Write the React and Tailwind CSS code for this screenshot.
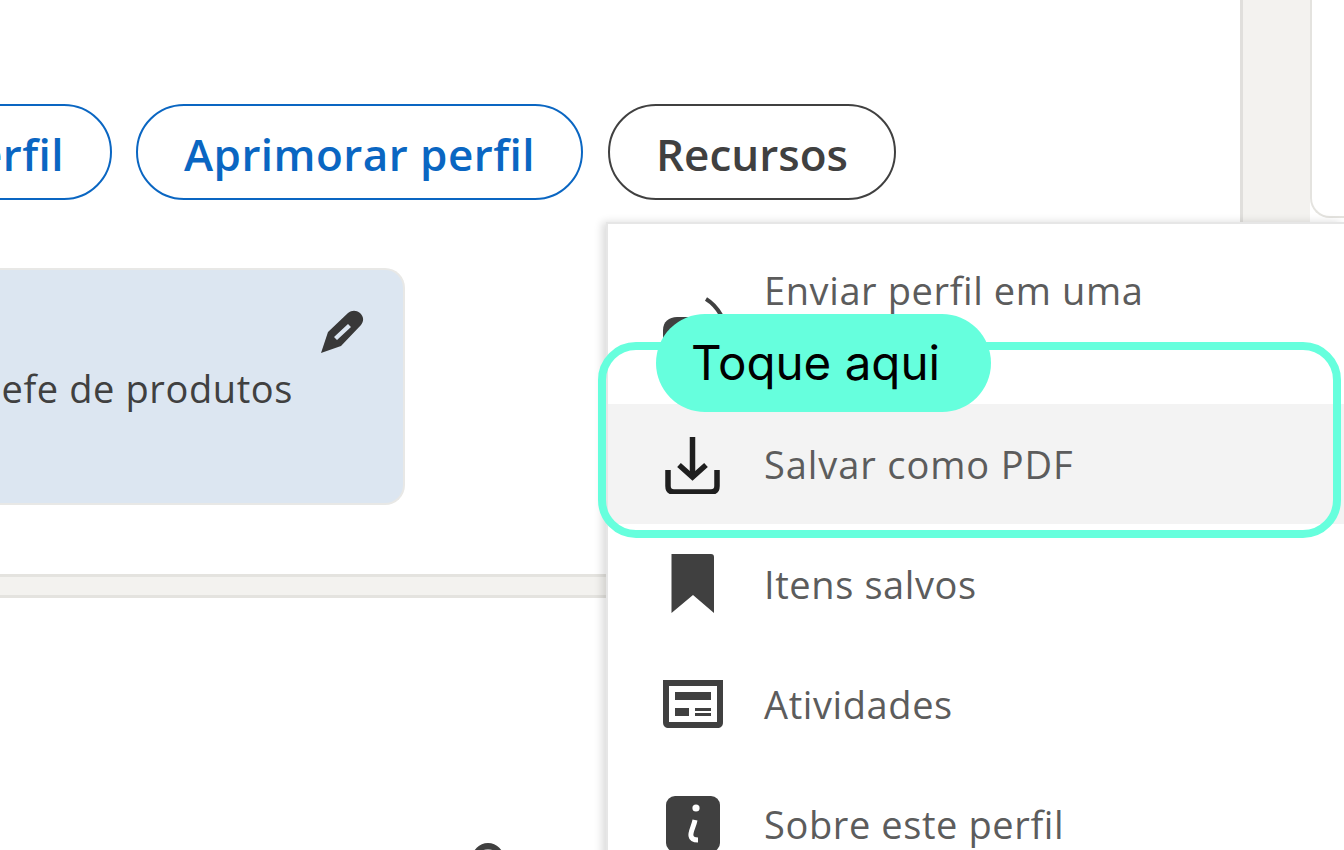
function SendIcon() {
  return (
    <svg width="60" height="60" viewBox="0 0 60 60" className="shrink-0" fill="none">
      <path d="M43 15 C48 18 54 24 58 31" stroke="#404040" strokeWidth="4" />
      <path d="M0 60 V46 C0 38 6 33 14 33 H30 V60 Z" fill="#404040" />
    </svg>
  );
}

function DownloadIcon() {
  return (
    <svg width="60" height="60" viewBox="0 0 60 60" className="shrink-0" fill="none" stroke="#1f1f1f" strokeWidth="5.5">
      <path d="M29.5 3 V43" />
      <path d="M16 31 L29.5 43 L43 31" />
      <path d="M5 36 V52 C5 56 7 58 11 58 H48 C52 58 54 56 54 52 V36" />
    </svg>
  );
}

function BookmarkIcon() {
  return (
    <svg width="60" height="60" viewBox="0 0 60 60" className="shrink-0">
      <path d="M8.5 0 H48 C50 0 51 1 51 3 V59 L30 41 L8.5 59 Z" fill="#404040" />
    </svg>
  );
}

function ActivityIcon() {
  return (
    <svg width="60" height="48" viewBox="0 0 60 48" className="shrink-0">
      <path d="M0 0 H60 V42 C60 46 58 48 54 48 H6 C2 48 0 46 0 42 Z" fill="#404040" />
      <rect x="6" y="6" width="48" height="36" fill="#fff" />
      <rect x="12" y="12" width="36" height="8" fill="#404040" />
      <rect x="12" y="28" width="14" height="8" fill="#404040" />
      <rect x="32" y="28" width="16" height="3" fill="#404040" />
      <rect x="32" y="33" width="16" height="3" fill="#404040" />
    </svg>
  );
}

function InfoIcon() {
  return (
    <svg width="60" height="60" viewBox="0 0 60 60" className="shrink-0">
      <rect x="3" y="2" width="54" height="56" rx="9" fill="#404040" />
      <circle cx="33" cy="14" r="3.6" fill="#fff" />
      <path d="M32 26 C31 32 27 38 28 42 C28.5 45 31 46 35 46" fill="none" stroke="#fff" strokeWidth="5" />
    </svg>
  );
}

function Pencil() {
  return (
    <svg width="44" height="44" viewBox="0 0 44 44" className="shrink-0">
      <path
        fillRule="evenodd"
        d="M1 43 L8 22 L28 3 C32 0 36 0 40 3 C44 7 44 11 41 15 L21 36 Z M14 27 L17 30 L31 17 L28 14 Z"
        fill="#383838"
      />
    </svg>
  );
}

function MenuRow({ icon, label, className = "h-[120px]", textClass = "" }) {
  return (
    <div className={`flex items-center gap-[41px] pl-[55px] ${className}`}>
      <div className="flex w-[60px] shrink-0 justify-center">{icon}</div>
      <div className={`w-[460px] text-[38px] leading-[46px] tracking-[0.6px] text-[#5c5c5c] ${textClass}`}>{label}</div>
    </div>
  );
}

export default function App() {
  return (
    <div
      className="relative flex h-[850px] w-[1344px] overflow-hidden bg-white"
      style={{ fontFamily: '"Open Sans", "Noto Sans", sans-serif' }}
    >
      <div className="w-[1240px] shrink-0">
        <div className="flex h-[268px] w-[896px] items-start justify-end gap-[25px] pt-[104px]">
          <button className="-mr-px h-[96px] shrink-0 whitespace-nowrap rounded-full border-2 border-[#0a66c2] pl-[47px] pr-[46px] pt-[3px] text-[44px] font-semibold tracking-[0.45px] text-[#0a66c2]">
            Adicionar seção ao perfil
          </button>
          <button className="h-[96px] w-[447px] shrink-0 whitespace-nowrap rounded-full border-2 border-[#0a66c2] pt-[3px] text-[44px] font-semibold tracking-[0.45px] text-[#0a66c2]">
            Aprimorar perfil
          </button>
          <button className="h-[96px] w-[288px] shrink-0 whitespace-nowrap rounded-full border-2 border-[#404040] pt-[3px] text-[44px] font-semibold text-[#404040]">
            Recursos
          </button>
        </div>

        <div className="flex h-[237px] w-[405px] flex-col items-end rounded-r-[20px] border-2 border-l-0 border-[#e8e8e6] bg-[#dce6f1] pr-[39px] pt-[40px]">
          <Pencil />
          <div className="mr-[71px] mt-[9px] whitespace-nowrap text-[38px] leading-[50px] tracking-[0.6px] text-[#404040]">
            Chefe de produtos
          </div>
        </div>

        <div className="mt-[69px] h-[24px] border-y-[3px] border-[#e4e3df] bg-[#f3f2ef]" />

        <div className="pl-[472px] pt-[245px]">
          <div className="h-[32px] w-[32px] rounded-full border-[6px] border-[#404040] bg-[#a8a8a8]" />
        </div>
      </div>

      <div className="w-[70px] shrink-0 border-l-[3px] border-[#e0dfdc] bg-[#f3f2ef]" />

      <div className="h-[218px] flex-1 rounded-bl-[20px] border-b-[2px] border-l-[2px] border-[#e4e3df] bg-white" />

      <div className="absolute left-[606px] top-[222px] w-[738px] border-l-2 border-t-2 border-[#e6e6e6] bg-white shadow-[-4px_0_8px_rgba(0,0,0,0.14)]">
        <MenuRow
          className="h-[180px]"
          textClass="-mt-[2px]"
          icon={<SendIcon />}
          label={
            <>
              Enviar perfil em uma
              <br />
              mensagem
            </>
          }
        />
        <MenuRow className="h-[120px] bg-[#f3f3f3]" textClass="tracking-[0.9px]" icon={<DownloadIcon />} label="Salvar como PDF" />
        <MenuRow icon={<BookmarkIcon />} label="Itens salvos" />
        <MenuRow icon={<ActivityIcon />} label="Atividades" />
        <MenuRow icon={<InfoIcon />} label="Sobre este perfil" />
      </div>

      <div className="absolute left-[598px] top-[342px] h-[196px] w-[743px] rounded-[38px] border-[8px] border-[#66ffdd]" />

      <div
        className="absolute left-[656px] top-[314px] flex h-[98px] w-[335px] items-center rounded-full bg-[#66ffdd] pl-[35px] text-[47.5px] text-black"
        style={{ fontFamily: "Inter, sans-serif" }}
      >
        Toque aqui
      </div>
    </div>
  );
}
